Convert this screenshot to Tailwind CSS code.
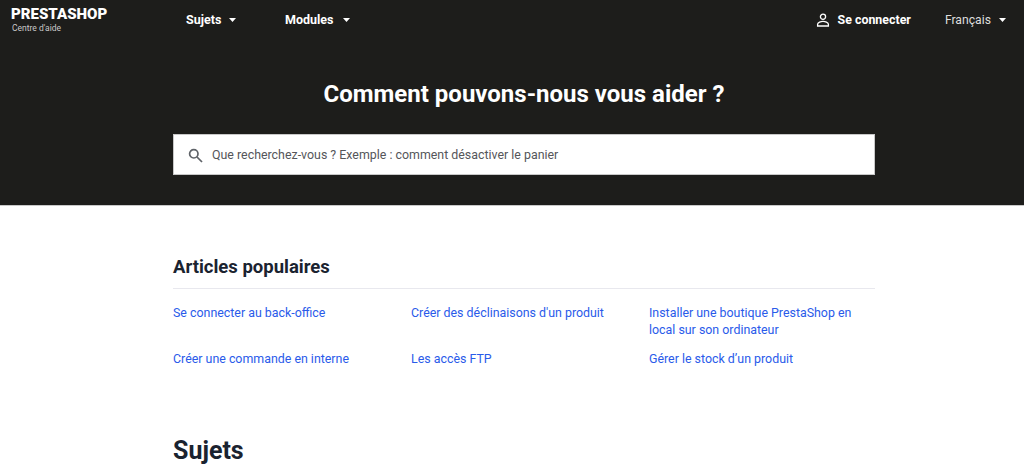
<!DOCTYPE html>
<html lang="fr">
<head>
<meta charset="utf-8">
<script src="https://cdn.jsdelivr.net/npm/@tailwindcss/browser@4"></script>
</head>
<body class="h-[471px] overflow-hidden bg-white font-['Roboto','Noto_Sans',sans-serif]">
<header class="h-[206px] bg-[#1d1d1b] border-b border-[#c8c8c8]">
  <nav class="flex h-[40px] items-center text-[12.5px] text-white">
    <div class="w-[186px] pl-[11px]">
      <div class="text-[15px] leading-[14px] font-black">PRESTASHOP</div>
      <div class="mt-[2px] pl-[1px] text-[8.5px] leading-[11px] text-[#c9c9c9]">Centre d'aide</div>
    </div>
    <div class="flex w-[99px] items-center font-bold"><span>Sujets</span><svg class="ml-[8px]" width="7" height="4" viewBox="0 0 7 4"><path d="M0 0h7L3.5 4z" fill="#fff"/></svg></div>
    <div class="flex items-center font-bold"><span>Modules</span><svg class="ml-[9px]" width="7" height="4" viewBox="0 0 7 4"><path d="M0 0h7L3.5 4z" fill="#fff"/></svg></div>
    <div class="ml-auto flex items-center pr-[18px]">
      <svg class="mr-[8px]" width="14" height="14" viewBox="0 0 14 14" fill="none" stroke="#fff" stroke-width="1.3"><circle cx="7" cy="3.8" r="2.6"/><path d="M1.6 13v-1.8c0-1.9 3.4-2.8 5.4-2.8s5.4.9 5.4 2.8V13z"/></svg>
      <span class="text-[12.4px] font-bold">Se connecter</span>
      <span class="ml-[34px] text-[12.2px] text-[#dddddd]">Français</span>
      <svg class="ml-[8px]" width="7" height="4" viewBox="0 0 7 4"><path d="M0 0h7L3.5 4z" fill="#fff"/></svg>
    </div>
  </nav>
  <h1 class="mt-[35px] ml-[24px] text-center text-[24px] leading-[38px] font-bold text-white">Comment pouvons-nous vous aider ?</h1>
  <div class="ml-[173px] mt-[21px] flex h-[41px] w-[702px] items-center border border-[#c8c8c8] bg-white pl-[14px] pt-[1px] text-[12.4px] text-[#55565a]">
    <svg class="mr-[9px]" width="15" height="15" viewBox="0 0 15 15" fill="none" stroke="#5f6368" stroke-width="1.7"><circle cx="5.8" cy="5.8" r="4.2"/><path d="M9 9l5 5"/></svg>
    <span>Que recherchez-vous ? Exemple : comment désactiver le panier</span>
  </div>
</header>
<main class="ml-[173px] w-[702px]">
  <h2 class="mt-[49px] text-[18.5px] leading-[24px] font-bold text-[#1a2330]">Articles populaires</h2>
  <div class="mt-[9px] border-t border-[#e8e8ee] pt-[15px]">
    <div class="grid grid-cols-[238px_238px_226px] gap-y-[12px] text-[12.4px] leading-[17px] text-[#2a5bea]">
      <a>Se connecter au back-office</a>
      <a>Créer des déclinaisons d'un produit</a>
      <a>Installer une boutique PrestaShop en local sur son ordinateur</a>
      <a>Créer une commande en interne</a>
      <a>Les accès FTP</a>
      <a>Gérer le stock d’un produit</a>
    </div>
  </div>
  <h2 class="mt-[68px] text-[25px] leading-[32px] font-bold text-[#1a2330]">Sujets</h2>
</main>
</body>
</html>
